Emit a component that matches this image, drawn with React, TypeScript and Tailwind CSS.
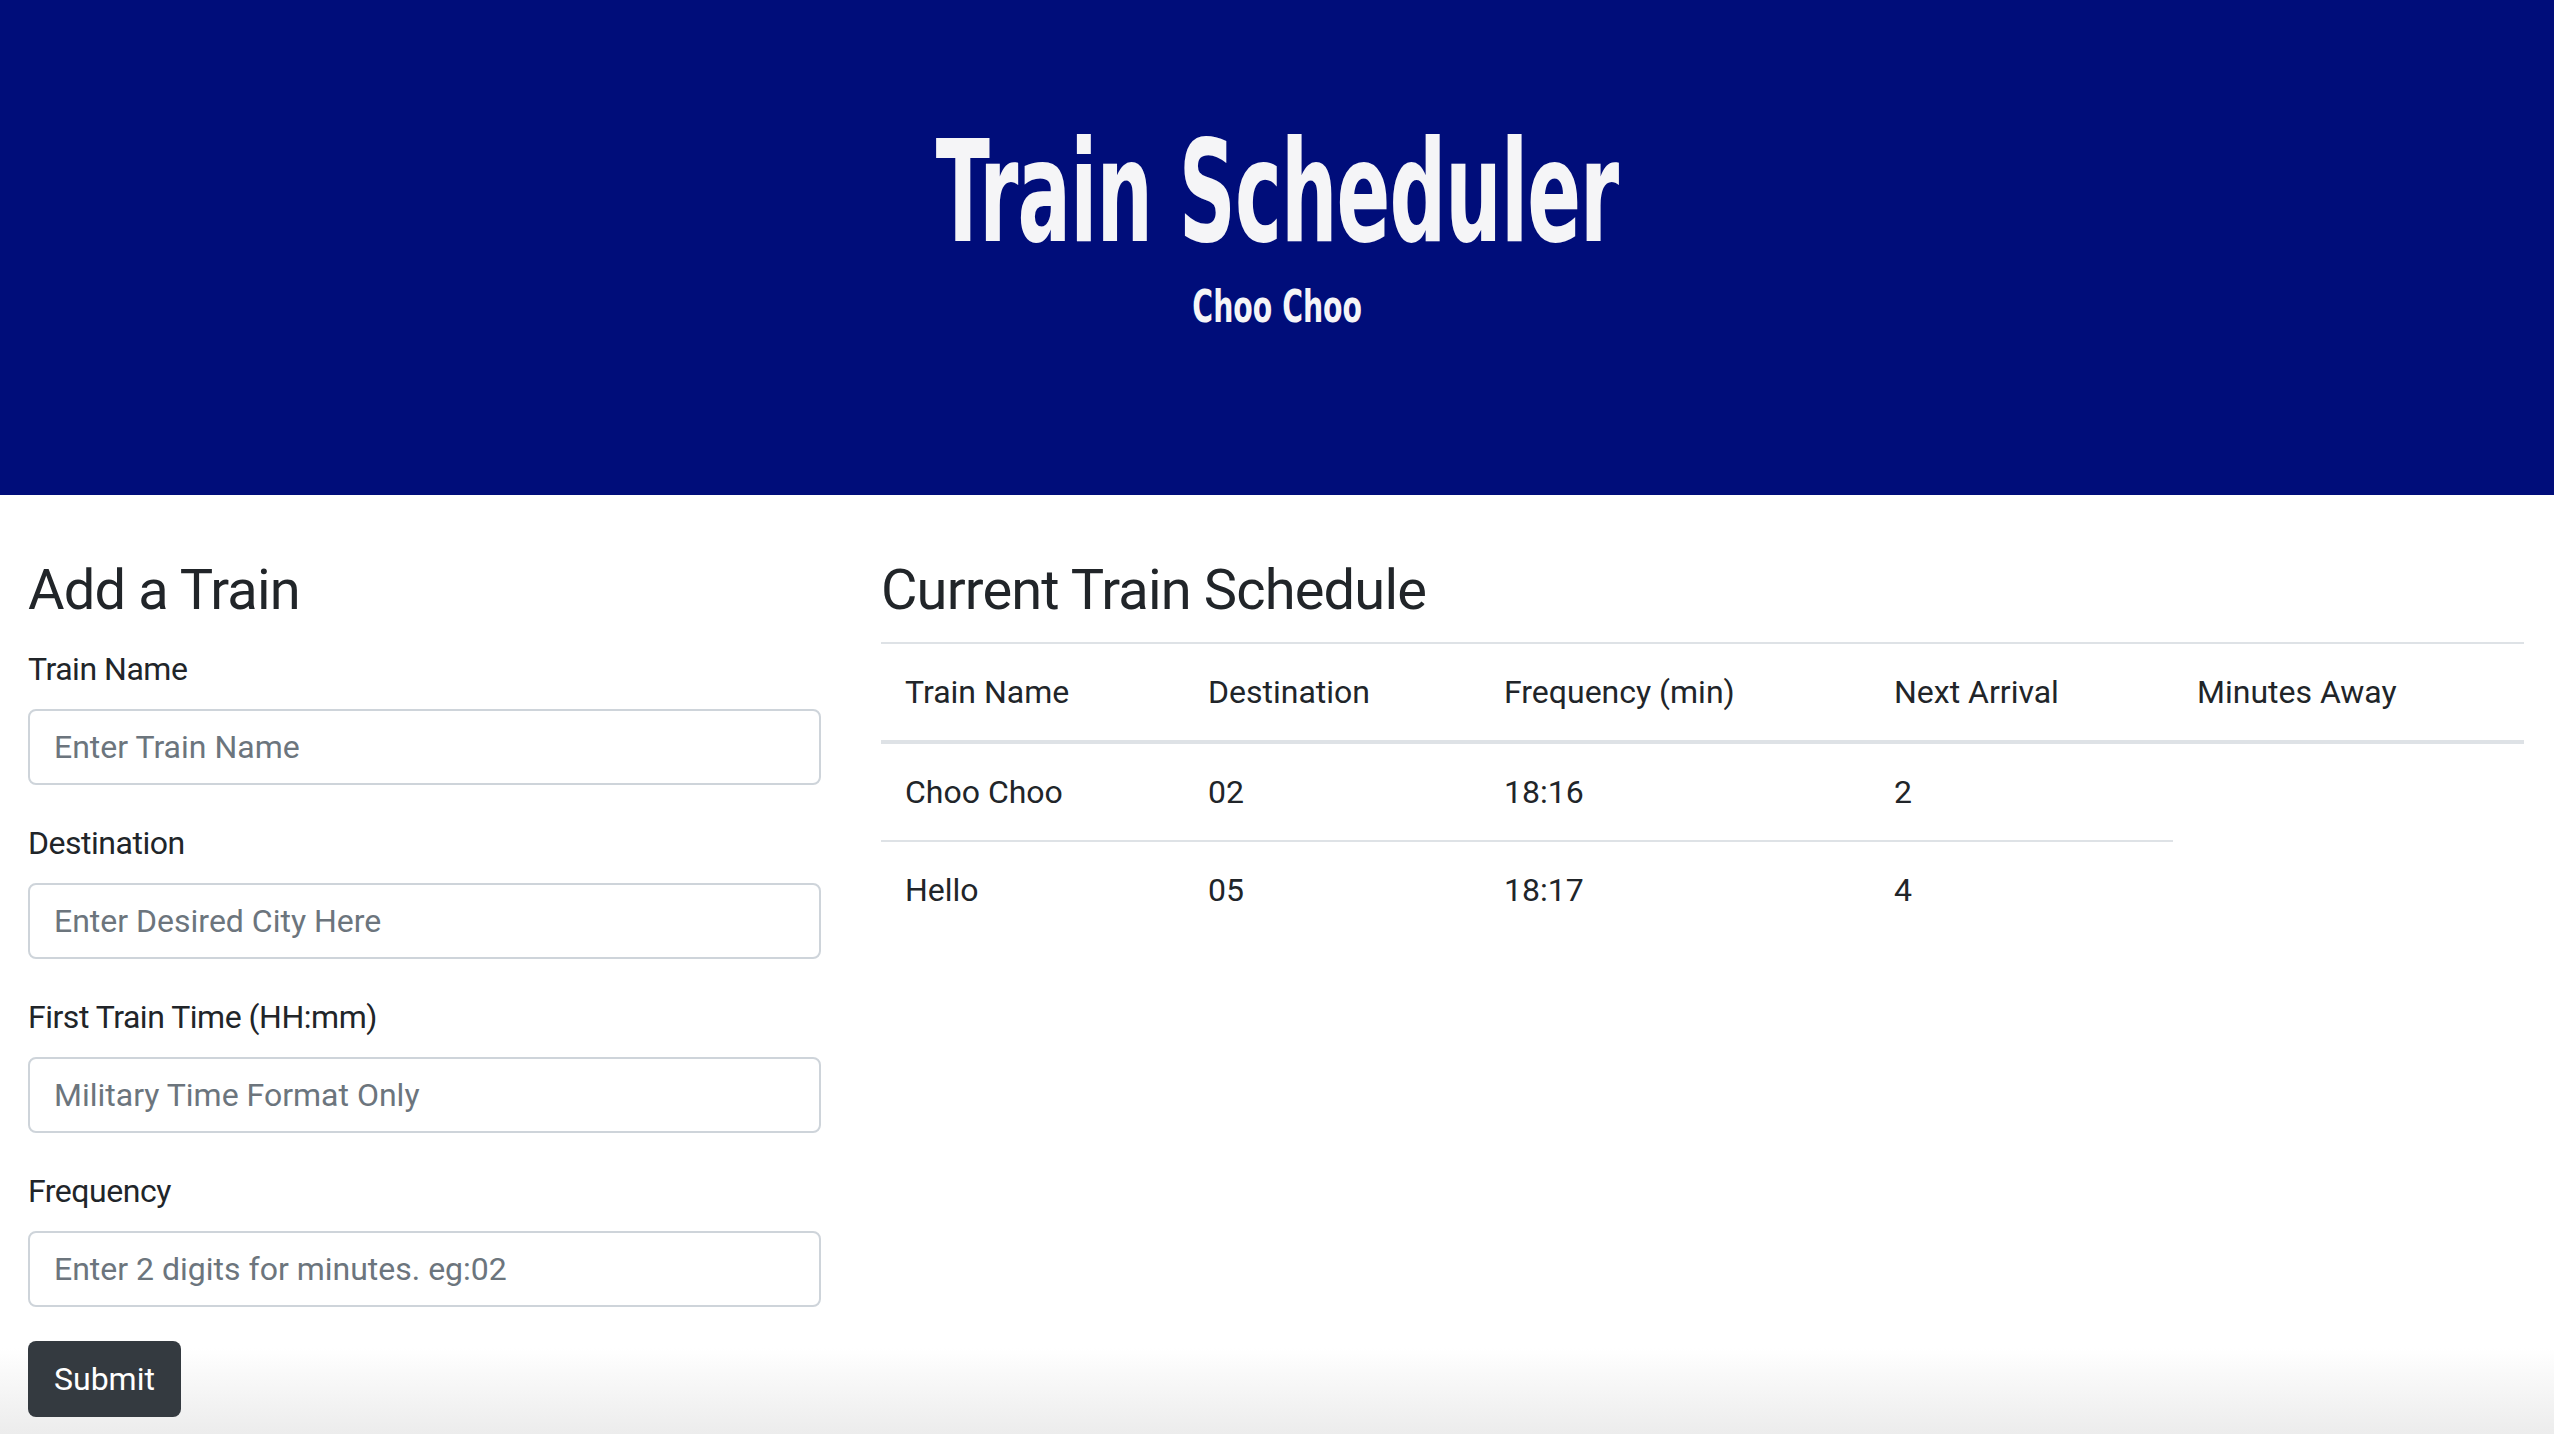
const body = { fontFamily: "Roboto, 'Liberation Sans', sans-serif" };
const display = { fontFamily: "'DejaVu Sans', sans-serif", fontStretch: "condensed" };

const fields = [
  { label: "Train Name", placeholder: "Enter Train Name" },
  { label: "Destination", placeholder: "Enter Desired City Here" },
  { label: "First Train Time (HH:mm)", placeholder: "Military Time Format Only" },
  { label: "Frequency", placeholder: "Enter 2 digits for minutes. eg:02" },
];

const rows = [
  ["Choo Choo", "02", "18:16", "2"],
  ["Hello", "05", "18:17", "4"],
];

const headers = ["Train Name", "Destination", "Frequency (min)", "Next Arrival", "Minutes Away"];
const colWidths = ["w-[303px]", "w-[296px]", "w-[390px]", "w-[303px]", ""];

export default function App() {
  return (
    <div
      className="min-h-screen bg-linear-to-b from-white from-[94%] to-[#ececec] text-[#212529]"
      style={body}
    >
      <header className="flex h-[495px] flex-col items-center bg-[#000d7a] pt-[122px] text-[#f5f5f7]">
        <h1
          className="scale-x-[0.625] text-[141px] font-bold leading-[140px] tracking-[-0.01em]"
          style={display}
        >
          Train Scheduler
        </h1>
        <h4
          className="mt-[15px] scale-x-[0.7] text-[45px] font-bold leading-[60px]"
          style={display}
        >
          Choo Choo
        </h4>
      </header>

      <main className="flex gap-[60px] pl-[28px] pr-[30px] pt-[57px]">
        <form className="w-[793px] shrink-0" onSubmit={(e) => e.preventDefault()}>
          <h2 className="mb-[16px] text-[56px] leading-[77px] tracking-[-0.015em]">Add a Train</h2>
          {fields.map((f) => (
            <div className="mb-[34px]" key={f.label}>
              <label className="mb-[16px] block text-[32px] leading-[48px] tracking-[-0.015em]">
                {f.label}
              </label>
              <input
                className="h-[76px] w-full rounded-[8px] border-2 border-[#ced4da] bg-white px-[24px] text-[32px] outline-none placeholder:text-[#6c757d]"
                placeholder={f.placeholder}
                type="text"
              />
            </div>
          ))}
          <button
            className="h-[76px] rounded-[8px] bg-[#343a40] px-[26px] text-[32px] text-white"
            type="submit"
          >
            Submit
          </button>
        </form>

        <section className="flex-1">
          <h2 className="mb-[13px] text-[56px] leading-[77px] tracking-[-0.015em]">
            Current Train Schedule
          </h2>
          <table className="w-full table-fixed border-collapse text-left text-[32px] leading-[48px]">
            <thead>
              <tr>
                {headers.map((h, i) => (
                  <th
                    className={`${colWidths[i]} border-t-2 border-b-4 border-[#dee2e6] p-[24px] align-bottom font-normal`}
                    key={h}
                  >
                    {h}
                  </th>
                ))}
              </tr>
            </thead>
            <tbody>
              {rows.map((r) => (
                <tr key={r[0]}>
                  {r.map((c, i) => (
                    <td className="border-t-2 border-[#dee2e6] p-[24px]" key={i}>
                      {c}
                    </td>
                  ))}
                </tr>
              ))}
            </tbody>
          </table>
        </section>
      </main>
    </div>
  );
}
